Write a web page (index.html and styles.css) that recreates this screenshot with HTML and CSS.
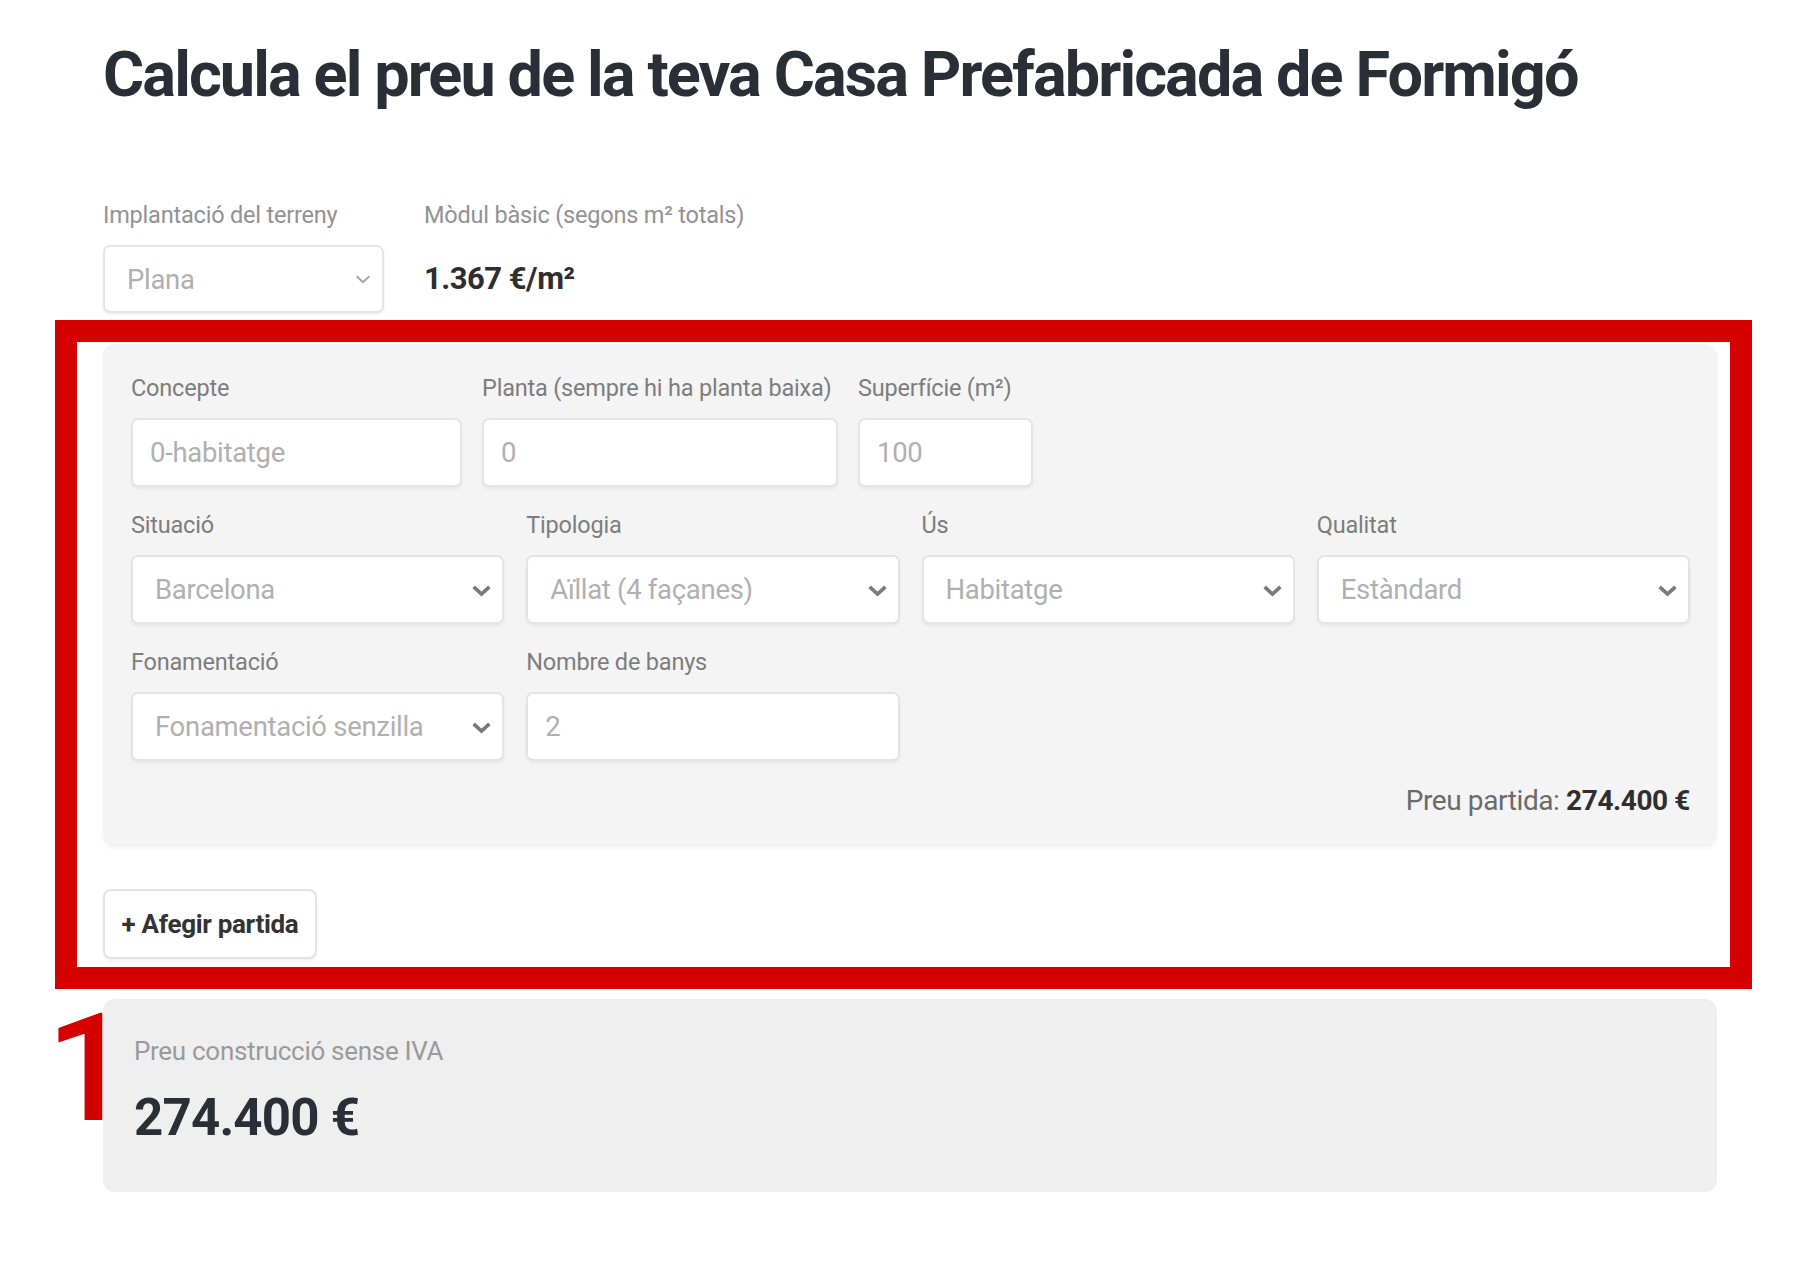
FILE: index.html
```html
<!DOCTYPE html>
<html lang="ca">
<head>
  <meta charset="UTF-8">
  <title>Calculadora Casa Prefabricada de Formigó</title>
  <link rel="stylesheet" href="styles.css">
</head>
<body>

<main class="page">
  <h1 class="title">Calcula el preu de la teva Casa Prefabricada de Formigó</h1>

  <div class="top-fields">
    <div class="field field-terreny">
      <label class="label">Implantació del terreny</label>
      <div class="select-wrap">
        <select class="control select"><option>Plana</option></select>
        <svg class="chevron chevron-light" viewBox="0 0 20 12"><path d="M3 3 L10 9.5 L17 3"/></svg>
      </div>
    </div>
    <div class="field">
      <span class="label">Mòdul bàsic (segons m² totals)</span>
      <strong class="modul-value">1.367 €/m²</strong>
    </div>
  </div>

  <!-- partides (marcat en vermell) -->
  <section class="items">
    <div class="item-card">
      <div class="row-first">
        <div class="field w-concepte">
          <label class="label">Concepte</label>
          <input class="control" type="text" value="0-habitatge">
        </div>
        <div class="field w-planta">
          <label class="label">Planta (sempre hi ha planta baixa)</label>
          <input class="control" type="text" value="0">
        </div>
        <div class="field w-superficie">
          <label class="label">Superfície (m²)</label>
          <input class="control" type="text" value="100">
        </div>
      </div>

      <div class="grid-4">
        <div class="field">
          <label class="label">Situació</label>
          <div class="select-wrap">
            <select class="control select"><option>Barcelona</option></select>
            <svg class="chevron" viewBox="0 0 20 12"><path d="M2.5 2.5 L10 9.5 L17.5 2.5"/></svg>
          </div>
        </div>
        <div class="field">
          <label class="label">Tipologia</label>
          <div class="select-wrap">
            <select class="control select"><option>Aïllat (4 façanes)</option></select>
            <svg class="chevron" viewBox="0 0 20 12"><path d="M2.5 2.5 L10 9.5 L17.5 2.5"/></svg>
          </div>
        </div>
        <div class="field">
          <label class="label">Ús</label>
          <div class="select-wrap">
            <select class="control select"><option>Habitatge</option></select>
            <svg class="chevron" viewBox="0 0 20 12"><path d="M2.5 2.5 L10 9.5 L17.5 2.5"/></svg>
          </div>
        </div>
        <div class="field">
          <label class="label">Qualitat</label>
          <div class="select-wrap">
            <select class="control select"><option>Estàndard</option></select>
            <svg class="chevron" viewBox="0 0 20 12"><path d="M2.5 2.5 L10 9.5 L17.5 2.5"/></svg>
          </div>
        </div>
      </div>

      <div class="grid-4">
        <div class="field">
          <label class="label">Fonamentació</label>
          <div class="select-wrap">
            <select class="control select"><option>Fonamentació senzilla</option></select>
            <svg class="chevron" viewBox="0 0 20 12"><path d="M2.5 2.5 L10 9.5 L17.5 2.5"/></svg>
          </div>
        </div>
        <div class="field">
          <label class="label">Nombre de banys</label>
          <input class="control" type="text" value="2">
        </div>
      </div>

      <p class="item-price">Preu partida: <strong>274.400 €</strong></p>
    </div>

    <button class="add-btn" type="button">+ Afegir partida</button>
  </section>

  <section class="result">
    <span class="marker">1</span>
    <p class="result-label">Preu construcció sense IVA</p>
    <p class="result-value">274.400 €</p>
  </section>
</main>

</body>
</html>
```

FILE: styles.css
```css
* {
  box-sizing: border-box;
}

body {
  margin: 0;
  background: #fff;
  font-family: Roboto, "Liberation Sans", Arial, sans-serif;
  color: #2a2e37;
}

.page {
  width: 1614px;
  margin-left: 103px;
  padding-top: 37px;
}

.title {
  margin: 0;
  font-size: 63px;
  line-height: 76px;
  font-weight: 700;
  letter-spacing: -1.9px;
  color: #2a2e37;
}

/* camps generals */
.field {
  display: flex;
  flex-direction: column;
}

.label {
  font-size: 23.5px;
  line-height: 26px;
  letter-spacing: -0.2px;
  color: #858585;
  margin-bottom: 17px;
  white-space: nowrap;
}

.control {
  width: 100%;
  height: 69px;
  padding: 0 17px;
  font-family: inherit;
  font-size: 27.5px;
  letter-spacing: -0.3px;
  color: #b0b0b0;
  background: #fff;
  border: 2px solid #e4e4e4;
  border-radius: 7px;
  box-shadow: 0 2px 3px rgba(0, 0, 0, 0.06);
  outline: none;
}

.select-wrap {
  position: relative;
}

.select {
  appearance: none;
  -webkit-appearance: none;
  padding-left: 22px;
}

.chevron {
  position: absolute;
  right: 12px;
  top: 50%;
  width: 21px;
  height: 13px;
  margin-top: -6px;
  fill: none;
  stroke: #7a7a7a;
  stroke-width: 3.4;
  pointer-events: none;
}

/* implantació + mòdul */
.top-fields {
  display: flex;
  gap: 40px;
  margin-top: 89px;
  margin-bottom: 7px;
}

.field-terreny {
  width: 281px;
}

.top-fields .label {
  color: #929292;
}

.field-terreny .control {
  height: 68px;
}

.chevron-light {
  stroke: #a5a5a5;
  stroke-width: 2.2;
  width: 18px;
  height: 12px;
  right: 12px;
}

.modul-value {
  height: 68px;
  line-height: 68px;
  font-size: 31px;
  font-weight: 700;
  letter-spacing: -0.5px;
  color: #2e2e2e;
}

/* bloc de partides */
.items {
  border: 22px solid #d50000;
  margin: 0 -35px 0 -48px;
  padding: 2px 13px 8px 26px;
}

.item-card {
  background: #f4f4f4;
  border-radius: 12px;
  box-shadow: 0 2px 4px rgba(0, 0, 0, 0.04);
  padding: 31px 27px 31px 28px;
}

.item-card .label {
  color: #7d7d7d;
}

.row-first {
  display: flex;
  gap: 20px;
}

.w-concepte { width: 331px; }
.w-planta { width: 356px; }
.w-superficie { width: 175px; }

.grid-4 {
  display: grid;
  grid-template-columns: repeat(4, 1fr);
  gap: 22px;
  margin-top: 25px;
}

.item-price {
  margin: 25px 0 0;
  text-align: right;
  font-size: 28px;
  line-height: 30px;
  letter-spacing: -0.4px;
  color: #6a6a6a;
}

.item-price strong {
  color: #2e2e2e;
}

.add-btn {
  margin-top: 42px;
  width: 214px;
  height: 70px;
  padding: 0;
  font-family: inherit;
  font-size: 26px;
  font-weight: 700;
  letter-spacing: -0.3px;
  color: #333;
  background: #fff;
  border: 2px solid #e2e2e2;
  border-radius: 8px;
  box-shadow: 0 2px 3px rgba(0, 0, 0, 0.06);
}

/* resultat */
.result {
  position: relative;
  margin-top: 10px;
  height: 193px;
  background: #efefef;
  border-radius: 12px;
  padding: 39px 31px 0;
}

.marker {
  position: absolute;
  left: -57px;
  top: -5px;
  font-family: Roboto, sans-serif;
  font-size: 150px;
  font-weight: 500;
  line-height: 1;
  color: #d50000;
}

.result-label {
  margin: 0;
  font-size: 26px;
  line-height: 26px;
  letter-spacing: -0.3px;
  color: #9a9a9a;
}

.result-value {
  margin: 23px 0 0;
  font-size: 51px;
  line-height: 62px;
  font-weight: 700;
  letter-spacing: -0.8px;
  color: #2a2e37;
}
```
